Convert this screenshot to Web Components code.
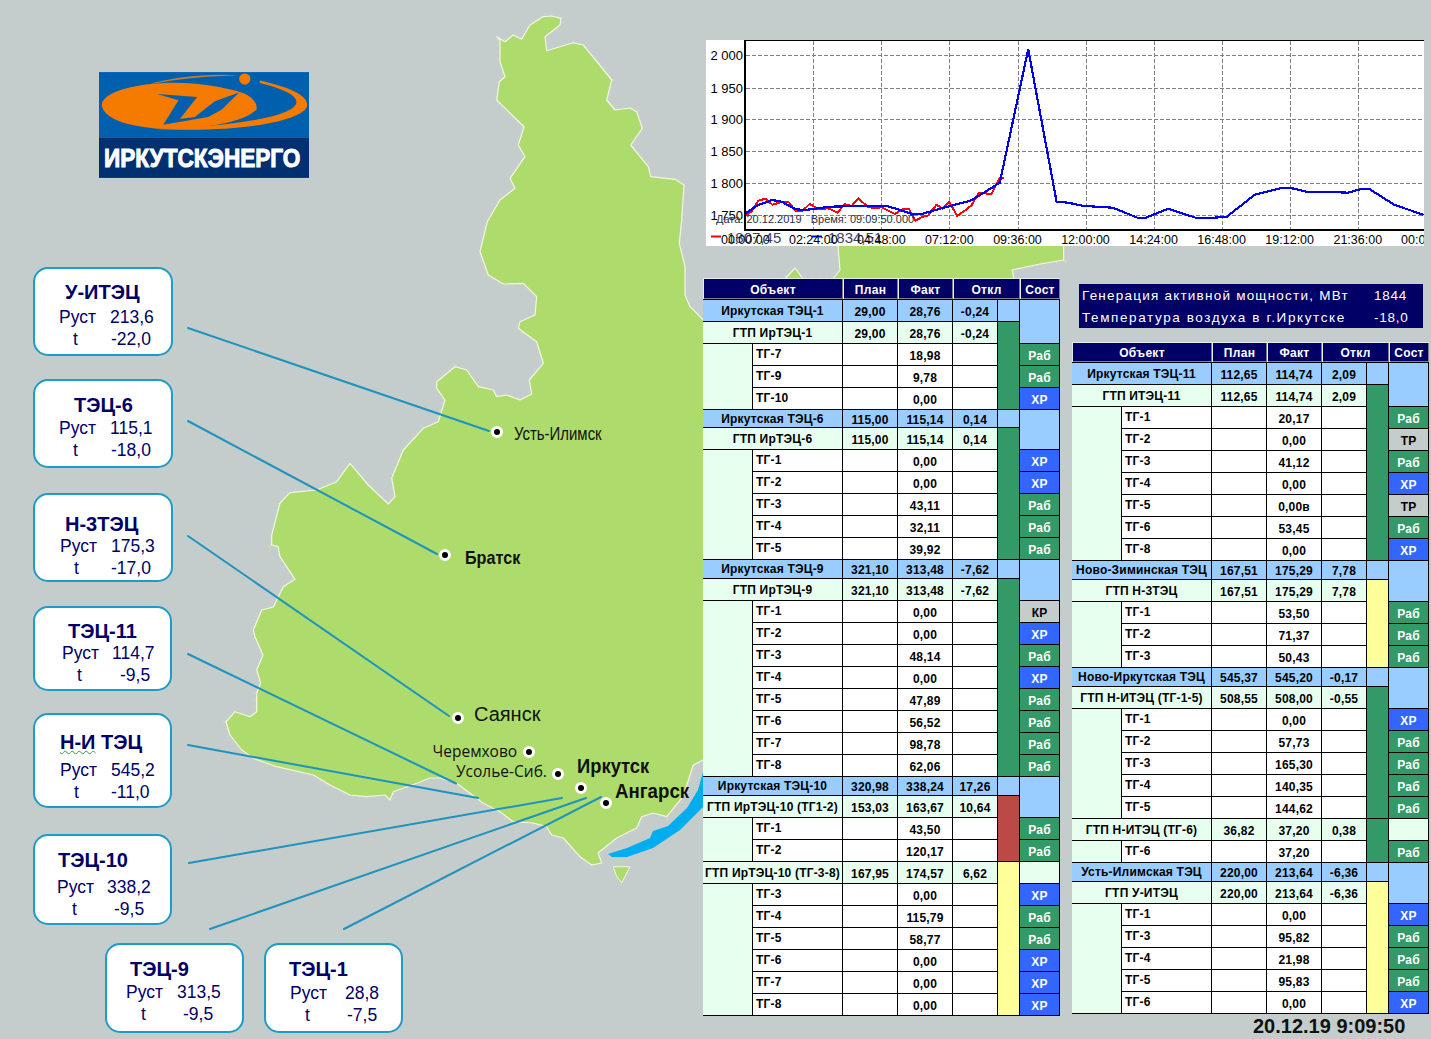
<!DOCTYPE html>
<html lang="ru"><head><meta charset="utf-8"><title>Иркутскэнерго</title>
<style>html,body{margin:0;padding:0;background:#C4CCCC;font-family:"Liberation Sans",Arial,sans-serif}</style>
</head><body>
<scada-screen>
  <region-map slot="canvas"></region-map>
  <brand-logo slot="canvas"></brand-logo>

  <city-pin slot="canvas" style="--x:497.5px;--y:432.5px;--lx:16px;--ly:1px;--fs:18px;--sx:.83">Усть-Илимск</city-pin>
  <city-pin slot="canvas" style="--x:445.5px;--y:555px;--lx:19.5px;--ly:1.5px;--fs:19px;--fw:700;--sx:.85">Братск</city-pin>
  <city-pin slot="canvas" style="--x:458.5px;--y:718px;--lx:15.5px;--ly:-4px;--fs:20px">Саянск</city-pin>
  <city-pin slot="canvas" style="--x:529.5px;--y:752px;--lx:-97px;--ly:0px;--fs:15.5px;--ff:'Open Sans'">Черемхово</city-pin>
  <city-pin slot="canvas" style="--x:558px;--y:774.5px;--lx:-102px;--ly:-3px;--fs:15.5px;--ff:'Open Sans'">Усолье-Сиб.</city-pin>
  <city-pin slot="canvas" style="--x:581px;--y:788.5px;--lx:-4px;--ly:-24px;--fs:21px;--fw:700;--sx:.875">Иркутск</city-pin>
  <city-pin slot="canvas" style="--x:606px;--y:803px;--lx:9px;--ly:-13px;--fs:21px;--fw:700;--sx:.89">Ангарск</city-pin>

  <plant-card slot="canvas" p="213,6" t="-22,0" style="--x:33px;--y:267px;--w:140px;--h:89px;--tx:31px;--ty:13px;--gap:2px;--rx:25px;--vx:76px;--lx:39px;--lv:77px">У-ИТЭЦ</plant-card>
  <plant-card slot="canvas" p="115,1" t="-18,0" style="--x:33px;--y:379px;--w:140px;--h:89px;--tx:40px;--ty:14px;--gap:0px;--rx:25px;--vx:76px;--lx:39px;--lv:77px">ТЭЦ-6</plant-card>
  <plant-card slot="canvas" p="175,3" t="-17,0" style="--x:33px;--y:493px;--w:140px;--h:89px;--tx:31px;--ty:19px;--gap:-1px;--rx:26px;--vx:77px;--lx:40px;--lv:77px">Н-3ТЭЦ</plant-card>
  <plant-card slot="canvas" p="114,7" t="-9,5" style="--x:33px;--y:606px;--w:139px;--h:85px;--tx:34px;--ty:13px;--gap:-1px;--rx:28px;--vx:78px;--lx:43px;--lv:86px">ТЭЦ-11</plant-card>
  <plant-card slot="canvas" p="545,2" t="-11,0" style="--x:33px;--y:713px;--w:139px;--h:95px;--tx:26px;--ty:17px;--gap:5px;--rx:26px;--vx:77px;--lx:40px;--lv:77px"><span style="text-decoration:underline wavy #3a9a3a 1px">Н-И</span> ТЭЦ</plant-card>
  <plant-card slot="canvas" p="338,2" t="-9,5" style="--x:33px;--y:834px;--w:139px;--h:91px;--tx:24px;--ty:14px;--gap:4px;--rx:23px;--vx:73px;--lx:38px;--lv:80px">ТЭЦ-10</plant-card>
  <plant-card slot="canvas" p="313,5" t="-9,5" style="--x:105px;--y:943px;--w:139px;--h:90px;--tx:24px;--ty:14px;--gap:0px;--rx:20px;--vx:71px;--lx:35px;--lv:77px">ТЭЦ-9</plant-card>
  <plant-card slot="canvas" p="28,8" t="-7,5" style="--x:264px;--y:943px;--w:139px;--h:90px;--tx:24px;--ty:14px;--gap:1px;--rx:25px;--vx:80px;--lx:40px;--lv:82px">ТЭЦ-1</plant-card>

  <trend-chart slot="chart"></trend-chart>
  <plant-table slot="left" id="tl"></plant-table>
  <info-panel slot="right"></info-panel>
  <plant-table slot="right" id="tr" style="margin-top:14px"></plant-table>
  <stamp-clock slot="right">20.12.19 9:09:50</stamp-clock>
</scada-screen>

<script>
const def=(n,c)=>customElements.define(n,c);
const shadow=(el,html)=>{el.attachShadow({mode:'open'}).innerHTML=html};

def('scada-screen',class extends HTMLElement{constructor(){super();shadow(this,`<style>
:host{display:block;position:relative;width:1431px;height:1039px;overflow:hidden;background:#C4CCCC}
.panels{position:relative;z-index:1;display:grid;grid-template-columns:357px 357px;column-gap:12px;grid-template-rows:206px auto;padding:40px 0 0 703px;pointer-events:none}
.chart{grid-column:1/-1;margin-left:3px}
.left{margin-top:32px}
.right{margin-top:38px;display:flex;flex-direction:column}
</style>
<slot name="canvas"></slot>
<div class="panels"><div class="chart"><slot name="chart"></slot></div><div class="left"><slot name="left"></slot></div><div class="right"><slot name="right"></slot></div></div>`)}});

/* ---------- map ---------- */
const landPts="496.7,36.7 505,41.7 513,35 521.7,39.3 530,25 543,16.7 551.7,16 561,18.3 560,25 545,36.7 546.7,50.7 573,42.7 583.3,45 590,53.3 598,63 611.7,80 606.7,100 615,110 630,108 636.7,111.7 642.3,128.3 630.7,145 648.3,166.7 650.7,176.7 675,179.3 684,185 681.7,220 679.3,243.3 685,266.7 685,295 690,306.7 703.3,320 720,290 785,279 795,268 803,279 833,279 840,270 837.5,240 1063.6,240 1063.6,260 1040,264 1012,270 1014,279 1014,400 703,760 693.3,765 683,796.7 666.7,816.7 653,813 641.7,816.7 636.7,828 616.7,838 598,853 601.7,863 591.7,865 580,856.7 563.3,838 551.7,835 546.7,826.7 533,823 513.3,821.7 500,811.7 483.3,803.3 456.7,783.3 440,778 430,778 416.7,783.3 393.3,791.7 390,800 385,795 366.7,796.7 350,795 330,785 313.3,775 276.7,766.7 253.3,758.3 241.7,750 230,735 226,722 235,711.7 250,716.7 256.7,711.7 256.7,693 260.7,683 256.7,670 263,655 255,636.7 253.3,630 261.7,610 273.3,607 283.3,586.7 295,579.3 280,556.7 278,546.7 271.7,545 271.7,535 280,503 290,492.7 316.7,490 336.7,481.7 350,463.3 368.3,485 388.3,504 395,496.7 391.7,478.3 403.3,450 423.3,428.3 438.3,421.7 445,400 436.7,388.3 436.7,381.7 455,366.7 466.7,370 478.3,386.7 493.3,390 496.7,396.7 506.7,395 520,400 531.7,394 529.3,380 543.3,363.3 536.7,341.7 518.3,328.3 520,321.7 535,315 536.7,296.7 523.3,283.3 503.3,284 488.3,275 480,251.7 487.3,221.7 500,200 515,188.3 510,178.3 525,156.7 518.3,145 524,126.7 496.7,100 499.3,81.7 505,76.7 500,61.7 500,40";
const leaders=[[188,328,489,431],[188,421,437,554],[188,536,449,716],[188,654,456,783.5],[188,745,478,798],[189,863,562,798],[210,929,586,798],[344,929,601,797]];
def('region-map',class extends HTMLElement{constructor(){super();shadow(this,`<style>:host{position:absolute;left:0;top:0;width:1431px;height:1039px;display:block}svg{display:block}</style>
<svg width="1431" height="1039" viewBox="0 0 1431 1039">
<polygon points="${landPts}" fill="none" stroke="#d3d6bf" stroke-width="7" stroke-dasharray="1 6" opacity=".7"/>
<polygon points="${landPts}" fill="#ADDC6C" stroke="#F2F6E4" stroke-width="1.2" stroke-linejoin="round"/>
<polygon points="613.3,866.7 630,866.7 621.7,882.7 616.7,876.7" fill="#ADDC6C" stroke="#F2F6E4"/>
<path d="M703 772L698 790L687 808L668 826L653 831L650 838L627 848L608 854L612 857L627 857L653 848L680 830L703 807Z" fill="#00AEEF"/>
<g stroke="#1E93BD" stroke-width="2" stroke-linecap="round">${leaders.map(l=>`<line x1="${l[0]}" y1="${l[1]}" x2="${l[2]}" y2="${l[3]}"/>`).join('')}</g>
</svg>`)}});

def('brand-logo',class extends HTMLElement{constructor(){super();shadow(this,`<style>:host{position:absolute;left:99px;top:72px;width:210px;height:106px;display:block}svg{display:block}</style>
<svg width="210" height="106" viewBox="57 37 631 318">
<rect x="57" y="37" width="631" height="196" fill="#0060AE"/><rect x="57" y="233" width="631" height="122" fill="#003070"/>
<path fill="#F47A00" d="M65 135C70 100 150 75 250 70C340 66 430 80 490 100C520 112 535 135 530 150C500 180 420 200 330 205C200 215 70 190 65 135Z"/>
<path fill="#0060AE" d="M232 103L352 112L300 178L345 172L405 125L478 98L425 150L385 172L250 195L296 122Z"/>
<path fill="#F47A00" d="M540 62C620 80 690 105 682 140C670 185 470 222 215 207C420 205 640 175 650 130C655 105 600 85 540 70Z"/>
<path fill="#C8782A" d="M205 75C280 50 400 40 475 48C400 48 300 55 205 75Z"/>
<circle cx="495" cy="58" r="17" fill="#F47A00"/>
<text transform="translate(72 322) scale(.905 1)" font-family="Liberation Sans,Arial,sans-serif" font-weight="700" font-size="75" fill="#fff" stroke="#fff" stroke-width="3">ИРКУТСКЭНЕРГО</text>
</svg>`)}});

def('city-pin',class extends HTMLElement{constructor(){super();shadow(this,`<style>
:host{position:absolute;left:var(--x);top:var(--y);display:block;width:0;height:0;font:var(--fw,400) var(--fs,16px)/1 var(--ff,"Liberation Sans"),"Liberation Sans",sans-serif;color:#111}
.dot{position:absolute;left:-6.5px;top:-6.5px;width:6px;height:6px;border:3.5px solid #fff;background:#000;border-radius:50%}
.lab{position:absolute;left:var(--lx);top:var(--ly);white-space:nowrap;transform:translateY(-50%) scaleX(var(--sx,1));transform-origin:left center}
</style><div class="dot"></div><div class="lab"><slot></slot></div>`)}});

def('plant-card',class extends HTMLElement{constructor(){super();const p=this.getAttribute('p'),t=this.getAttribute('t');shadow(this,`<style>
:host{position:absolute;left:var(--x);top:var(--y);width:var(--w);height:var(--h);display:block;box-sizing:border-box;background:#fff;border:2px solid #1F9CC5;border-radius:15px;color:#000066;font-family:"Liberation Sans",sans-serif}
.wrap{display:flex;flex-direction:column;padding-top:calc(var(--ty) - 2px)}
.ti{font-size:20px;font-weight:700;line-height:24px;margin-left:calc(var(--tx) - 1px);margin-bottom:var(--gap);white-space:nowrap}
.row{display:flex;font-size:17.5px;line-height:22px;white-space:nowrap}
.a{margin-left:calc(var(--rx) - 1px);width:calc(var(--vx) - var(--rx))}
.b{margin-left:calc(var(--lx) - 1px);width:calc(var(--lv) - var(--lx))}
</style><div class="wrap"><div class="ti"><slot></slot></div>
<div class="row"><span class="a">Руст</span><span>${p}</span></div>
<div class="row"><span class="b">t</span><span>${t}</span></div></div>`)}});

/* ---------- chart ---------- */
const Z=(a)=>a.map(p=>`${(700+p[0]/2.145).toFixed(1)},${(30+p[1]/3).toFixed(1)}`).join(' ');
const blue=[[95,552],[125,525],[155,510],[175,515],[205,538],[225,540],[280,530],[340,528],[400,528],[430,540],[455,552],[475,552],[510,538],[580,512],[610,487],[643,458],[704,58],[765,515],[790,518],[820,527],[850,530],[885,533],[940,564],[955,564],[1005,536],[1065,564],[1095,564],[1130,560],[1190,494],[1250,473],[1265,473],[1300,485],[1340,485],[1390,488],[1420,476],[1435,476],[1490,525],[1552,554]];
const red=[[95,560],[110,545],[125,512],[140,506],[155,524],[175,516],[190,516],[205,542],[220,542],[235,522],[255,538],[275,535],[295,548],[310,522],[325,528],[340,506],[360,530],[375,535],[390,532],[418,552],[435,537],[448,537],[462,572],[475,562],[490,556],[507,524],[520,535],[535,516],[552,558],[570,540],[583,525],[598,488],[610,490],[625,492],[642,445],[652,443]];
const ylab=[['2 000',55.5],['1 950',88],['1 900',119.5],['1 850',151.5],['1 800',183.5],['1 750',215.5]];
const xlab=['00:00:00','02:24:00','04:48:00','07:12:00','09:36:00','12:00:00','14:24:00','16:48:00','19:12:00','21:36:00'];
const gx=i=>745.3+68.05*i;
def('trend-chart',class extends HTMLElement{constructor(){super();shadow(this,`<style>:host{display:block;width:718px;height:206px}svg{display:block;font-family:"Liberation Sans",sans-serif}</style>
<svg width="718" height="206" viewBox="706 40 718 206">
<rect x="706" y="40" width="718" height="206" fill="#fff"/>
<g stroke="#808080" stroke-width="1" stroke-dasharray="4 2">
${xlab.slice(1).map((_,i)=>`<line x1="${Math.round(gx(i+1))+.5}" y1="41" x2="${Math.round(gx(i+1))+.5}" y2="229"/>`).join('')}
${ylab.map(l=>`<line x1="746" y1="${Math.floor(l[1])+.5}" x2="1424" y2="${Math.floor(l[1])+.5}"/>`).join('')}
</g>
<polyline points="${Z(red)}" fill="none" stroke="#F00" stroke-width="2" shape-rendering="crispEdges"/>
<polyline points="${Z(blue)}" fill="none" stroke="#0000F0" stroke-width="2.2" shape-rendering="crispEdges"/>
<path d="M745 40.5H1424" stroke="#000" stroke-width="1"/><path d="M745 40V231" stroke="#000" stroke-width="2"/><path d="M745 230H1424" stroke="#000" stroke-width="2"/>
<g font-size="13" text-anchor="end" fill="#000">${ylab.map(l=>`<text x="743" y="${l[1]+4.5}">${l[0]}</text>`).join('')}</g>
<text x="716" y="222.5" font-size="11" fill="#2a3045" xml:space="preserve">Дата: 20.12.2019   Время: 09:09:50.000</text>
<path d="M711 236.5H721" stroke="#F00" stroke-width="2"/><path d="M812 236.5H822" stroke="#0000F0" stroke-width="2"/>
<text x="727" y="243" font-size="15" fill="#3c4660">1807,45</text>
<text x="828" y="243" font-size="15" fill="#3c4660">1834,51</text>
<g font-size="12.5" text-anchor="middle" fill="#000">${xlab.map((t,i)=>`<text x="${gx(i).toFixed(1)}" y="244">${t}</text>`).join('')}</g>
<text x="1401" y="244" font-size="12.5" fill="#000">00:0</text>
</svg>`)}});

def('info-panel',class extends HTMLElement{constructor(){super();shadow(this,`<style>
:host{display:grid;grid-template-columns:292px 1fr;grid-auto-rows:22px;align-items:center;box-sizing:border-box;margin-left:7px;width:344px;height:44px;padding-left:3px;padding-top:1px;background:#000066;color:#fff;font:13.5px/22px "Liberation Sans",sans-serif;letter-spacing:1.22px;white-space:nowrap}
.v{letter-spacing:.75px}
</style><span>Генерация активной мощности, МВт</span><span class="v">1844</span><span style="letter-spacing:1.6px">Температура воздуха в г.Иркутске</span><span class="v">-18,0</span>`)}});

def('stamp-clock',class extends HTMLElement{constructor(){super();shadow(this,`<style>
:host{display:block;margin:1px 0 0 181px;font:700 20px/22px "Liberation Sans",sans-serif;color:#111;white-space:nowrap}
</style><slot></slot>`)}});

/* ---------- tables ---------- */
const C={s:'#99CCFF',g:'#E6FFEF',t:'#fff',green:'#339966',blue:'#3366FF',grey:'#C4CCCC',red:'#BB4A46',yellow:'#FFFF99'};
def('t-cell',class extends HTMLElement{constructor(){super();shadow(this,`<style>
:host{display:flex;box-sizing:border-box;align-items:center;justify-content:center;background:var(--bg,#fff);border-right:1px solid #000;border-bottom:1px solid #000;color:var(--fg,#000);font:700 12px/14px "Liberation Sans",sans-serif;letter-spacing:.2px;white-space:nowrap;overflow:hidden;padding:var(--pad,0)}
.h{display:contents}
:host([head]){background:#000;border:0;padding:0 0 1px;align-items:stretch}
:host([head]) .h{flex:1;display:flex;align-items:center;justify-content:center;box-sizing:border-box;padding-top:2px;background:#000066;color:#fff;box-shadow:inset 1px 1px 0 #e8e8e8,inset -1px -1px 0 #808080;letter-spacing:.3px}
:host([name]){justify-content:flex-start;padding:0 0 2px 3px}
</style><div class="h"><slot></slot></div>`)}});

def('plant-table',class extends HTMLElement{constructor(){super();shadow(this,`<style>
:host{display:grid;grid-template-columns:50px 90px 55px 55px 45px 22px 40px;width:357px}
</style><slot></slot>`)}
set data(v){const {head,rows}=v;
 const add=(txt,r,c,rs,cs,bg,extra={})=>{const e=document.createElement('t-cell');e.textContent=txt||'';
   e.style.gridRow=`${r} / span ${rs}`;e.style.gridColumn=`${c} / span ${cs}`;e.style.setProperty('--bg',bg);
   if(extra.fg)e.style.setProperty('--fg',extra.fg);if(extra.pad)e.style.setProperty('--pad',extra.pad);
   for(const a of extra.attrs||[])e.setAttribute(a,'');this.appendChild(e)};
 [['Объект',1,2],['План',3,1],['Факт',4,1],['Откл',5,2],['Сост',7,1]].forEach(h=>add(h[0],1,h[1],1,h[2],'#000066',{attrs:['head']}));
 const tr=[head];let r=2;
 for(let i=0;i<rows.length;i++){const d=rows[i];
   if(d[0]==='s'){tr.push(d[5]||19);
     add(d[1],r,1,1,2,C.s);[2,3,4].forEach(k=>add(d[k],r,k+1,1,1,C.s,{pad:'2px 0 0'}));add('',r,6,1,1,C.s);add('',r,7,2,1,C.s);r++}
   else if(d[0]==='g'){tr.push(22);let n=0;while(rows[i+1+n]&&rows[i+1+n][0]==='t')n++;
     add(d[1],r,1,1,2,C.g);[2,3,4].forEach(k=>add(d[k],r,k+1,1,1,C.g,{pad:'2px 0 0'}));
     add('',r,6,1+n,1,C[d[5]]);if(rows[i-1][0]!=='s')add('',r,7,1,1,C.g);
     if(n)add('',r+1,1,n,1,C.g);r++}
   else{tr.push(22);add(d[1],r,2,1,1,C.t,{attrs:['name']});add('',r,3,1,1,C.t);add(d[2],r,4,1,1,C.t,{pad:'3px 0 0'});add('',r,5,1,1,C.t);
     const st={'Раб':[C.green,'#fff'],'ХР':[C.blue,'#fff'],'ТР':[C.grey,'#000'],'КР':[C.grey,'#000']}[d[3]];add(d[3],r,7,1,1,st[0],{fg:st[1],pad:'2px 0 0'});r++}
 }
 this.style.gridTemplateRows=tr.map(x=>x+'px').join(' ');
}});

const t=(n,f,s)=>['t',n,f,s];
document.getElementById('tl').data={head:22,rows:[
['s','Иркутская ТЭЦ-1','29,00','28,76','-0,24',22],['g','ГТП ИрТЭЦ-1','29,00','28,76','-0,24','green'],
t('ТГ-7','18,98','Раб'),t('ТГ-9','9,78','Раб'),t('ТГ-10','0,00','ХР'),
['s','Иркутская ТЭЦ-6','115,00','115,14','0,14',18],['g','ГТП ИрТЭЦ-6','115,00','115,14','0,14','green'],
t('ТГ-1','0,00','ХР'),t('ТГ-2','0,00','ХР'),t('ТГ-3','43,11','Раб'),t('ТГ-4','32,11','Раб'),t('ТГ-5','39,92','Раб'),
['s','Иркутская ТЭЦ-9','321,10','313,48','-7,62',19],['g','ГТП ИрТЭЦ-9','321,10','313,48','-7,62','green'],
t('ТГ-1','0,00','КР'),t('ТГ-2','0,00','ХР'),t('ТГ-3','48,14','Раб'),t('ТГ-4','0,00','ХР'),t('ТГ-5','47,89','Раб'),t('ТГ-6','56,52','Раб'),t('ТГ-7','98,78','Раб'),t('ТГ-8','62,06','Раб'),
['s','Иркутская ТЭЦ-10','320,98','338,24','17,26',19],['g','ГТП ИрТЭЦ-10 (ТГ1-2)','153,03','163,67','10,64','red'],
t('ТГ-1','43,50','Раб'),t('ТГ-2','120,17','Раб'),
['g','ГТП ИрТЭЦ-10 (ТГ-3-8)','167,95','174,57','6,62','yellow'],
t('ТГ-3','0,00','ХР'),t('ТГ-4','115,79','Раб'),t('ТГ-5','58,77','Раб'),t('ТГ-6','0,00','ХР'),t('ТГ-7','0,00','ХР'),t('ТГ-8','0,00','ХР')]};
document.getElementById('tr').data={head:21,rows:[
['s','Иркутская ТЭЦ-11','112,65','114,74','2,09',22],['g','ГТП ИТЭЦ-11','112,65','114,74','2,09','green'],
t('ТГ-1','20,17','Раб'),t('ТГ-2','0,00','ТР'),t('ТГ-3','41,12','Раб'),t('ТГ-4','0,00','ХР'),t('ТГ-5','0,00в','ТР'),t('ТГ-6','53,45','Раб'),t('ТГ-8','0,00','ХР'),
['s','Ново-Зиминская ТЭЦ','167,51','175,29','7,78',19],['g','ГТП Н-3ТЭЦ','167,51','175,29','7,78','yellow'],
t('ТГ-1','53,50','Раб'),t('ТГ-2','71,37','Раб'),t('ТГ-3','50,43','Раб'),
['s','Ново-Иркутская ТЭЦ','545,37','545,20','-0,17',19],['g','ГТП Н-ИТЭЦ (ТГ-1-5)','508,55','508,00','-0,55','green'],
t('ТГ-1','0,00','ХР'),t('ТГ-2','57,73','Раб'),t('ТГ-3','165,30','Раб'),t('ТГ-4','140,35','Раб'),t('ТГ-5','144,62','Раб'),
['g','ГТП Н-ИТЭЦ (ТГ-6)','36,82','37,20','0,38','green'],t('ТГ-6','37,20','Раб'),
['s','Усть-Илимская ТЭЦ','220,00','213,64','-6,36',19],['g','ГТП У-ИТЭЦ','220,00','213,64','-6,36','yellow'],
t('ТГ-1','0,00','ХР'),t('ТГ-3','95,82','Раб'),t('ТГ-4','21,98','Раб'),t('ТГ-5','95,83','Раб'),t('ТГ-6','0,00','ХР')]};
</script>
</body></html>
